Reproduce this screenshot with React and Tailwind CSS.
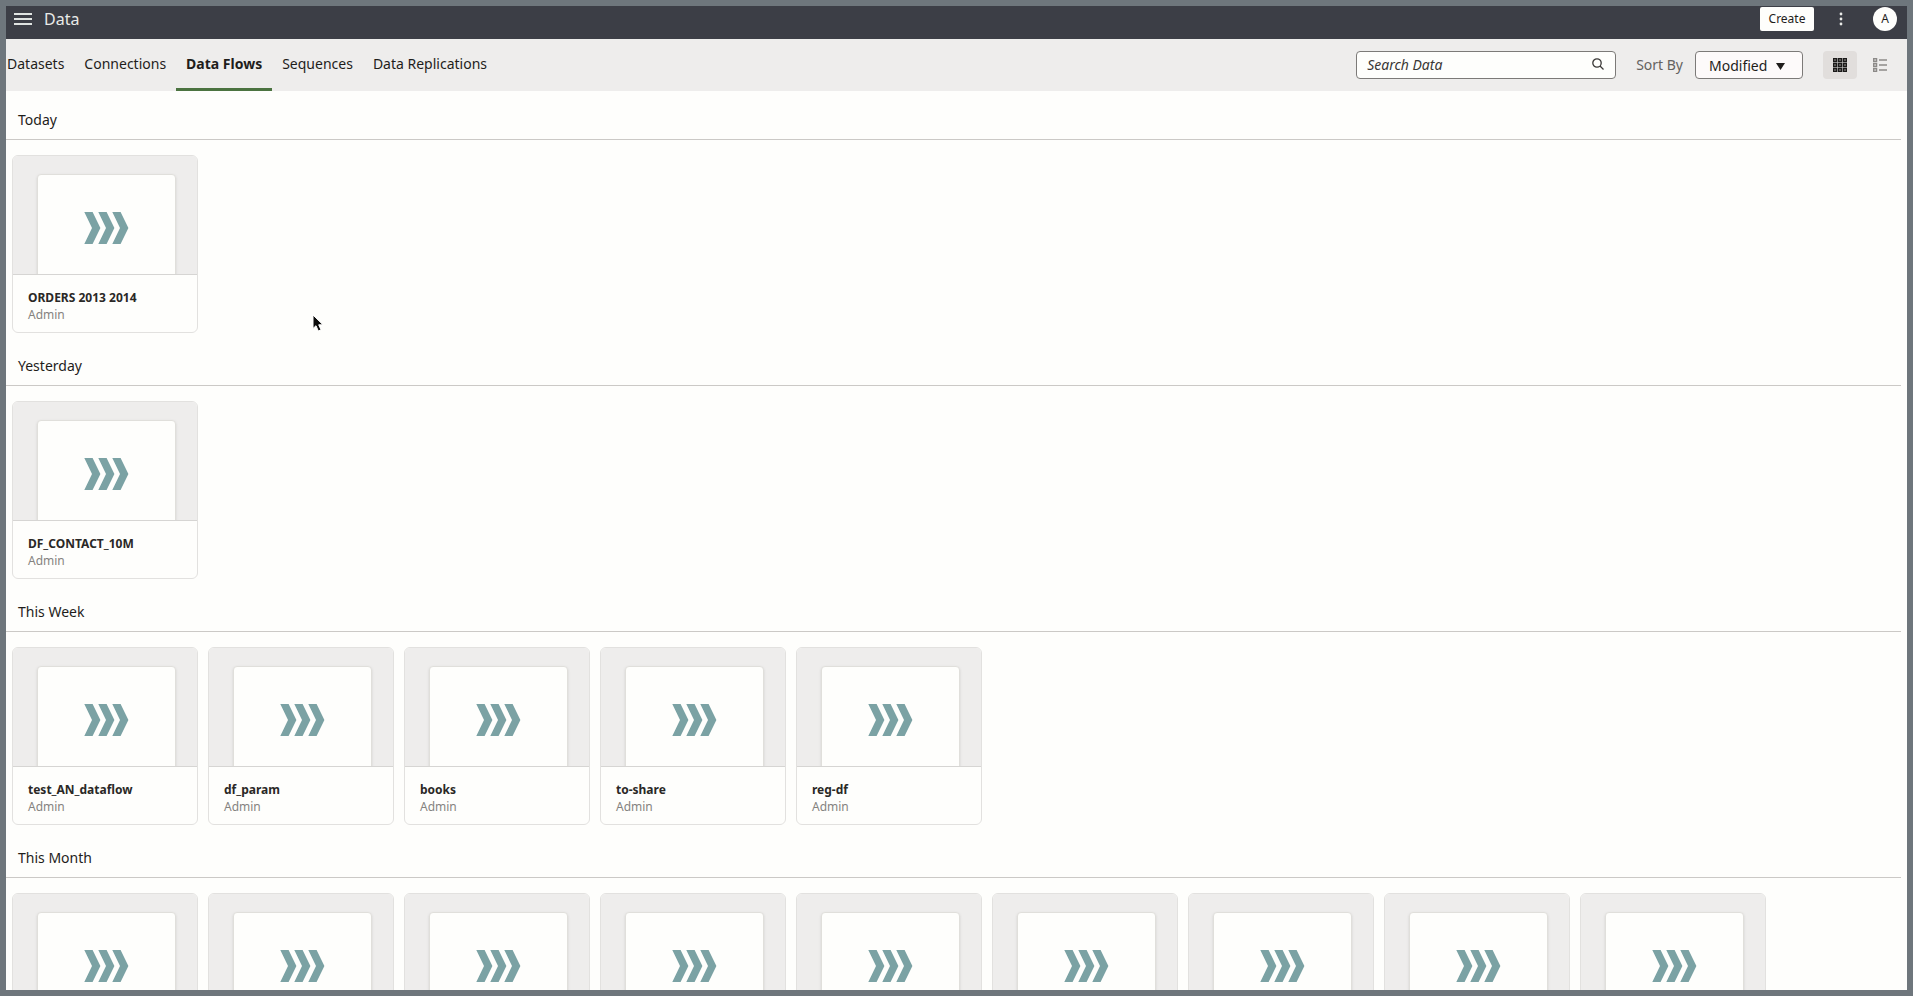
import { useState } from "react"

const tabs = ["Datasets", "Connections", "Data Flows", "Sequences", "Data Replications"]

const sections = [
  { title: "Today", flows: ["ORDERS 2013 2014"] },
  { title: "Yesterday", flows: ["DF_CONTACT_10M"] },
  { title: "This Week", flows: ["test_AN_dataflow", "df_param", "books", "to-share", "reg-df"] },
  // names of these are below the fold
  { title: "This Month", flows: ["", "", "", "", "", "", "", "", ""] },
]

const FlowIcon = () => (
  <svg width="45" height="32" viewBox="0 0 45 32" fill="#7ba2a4" aria-hidden="true">
    <path d="M0.3 0H8.6L16.4 16L8.6 32H0.3L8 16Z" />
    <path d="M14.3 0H22.6L30.4 16L22.6 32H14.3L22 16Z" />
    <path d="M28.3 0H36.6L44.4 16L36.6 32H28.3L36 16Z" />
  </svg>
)

const GridIcon = () => (
  <svg width="14" height="14" viewBox="0 0 14 14" fill="#8b8886" stroke="#1b1a19" strokeWidth="1.5" aria-hidden="true">
    {[0, 5, 10].map((y) => [0, 5, 10].map((x) => <rect key={`${x}-${y}`} x={x + 0.5} y={y + 0.5} width="3" height="3" />))}
  </svg>
)

const ListIcon = () => (
  <svg width="14" height="14" viewBox="0 0 14 14" fill="none" stroke="#8c8a88" strokeWidth="1.5" aria-hidden="true">
    {[0, 5, 10].map((y) => (
      <g key={y}>
        <rect x="0.7" y={y + 0.6} width="2.8" height="2.8" />
        <path d={`M6 ${y + 2}H14`} />
      </g>
    ))}
  </svg>
)

const FlowCard = ({ name }) => (
  <a
    href="#flow"
    aria-label={name || "Data flow"}
    className="block h-[178px] w-[186px] shrink-0 overflow-hidden rounded-md border border-[#e2e1df] bg-[#fefefc]"
  >
    <div className="h-[119px] overflow-hidden border-b border-[#d6d5d3] bg-[#eeedec] pt-[18px] pl-6">
      <div className="flex h-[110px] w-[139px] items-start justify-center rounded-t-sm border border-[#e0dfdb] bg-[#fefefc] pt-[37px] shadow-sm">
        <FlowIcon />
      </div>
    </div>
    {name && (
      <div className="px-[15px] pt-[14px] text-xs leading-[17px]">
        <div className="font-bold text-[#2a2826]">{name}</div>
        <div className="text-[#858380]">Admin</div>
      </div>
    )}
  </a>
)

const App = () => {
  const [activeTab, setActiveTab] = useState("Data Flows")
  const [search, setSearch] = useState("")

  return (
    <div className="relative flex h-screen flex-col overflow-hidden border-6 border-[#6e767c] bg-[#fefefc] font-['Noto_Sans','Open_Sans',sans-serif] text-sm text-[#1f1d1b]">
      <header className="flex h-[33px] shrink-0 items-start bg-[#3c3e46] pr-[10px] pl-2">
        <button aria-label="Menu" className="flex h-[26px] w-[18px] items-center">
          <svg width="18" height="12" viewBox="0 0 18 12" stroke="#dfe3e1" strokeWidth="2" aria-hidden="true">
            <path d="M0 1H18M0 6H18M0 11H18" />
          </svg>
        </button>
        <h1 className="ml-3 text-base leading-[26px] text-[#e9eae8]">Data</h1>
        <div className="mt-px ml-auto flex items-center">
          <button className="h-6 w-[54px] rounded-xs bg-[#fefefc] text-xs">Create</button>
          <button aria-label="More actions" className="ml-[21px] flex h-6 w-3 items-center justify-center">
            <svg width="4" height="14" viewBox="0 0 4 14" fill="#e9eae8" aria-hidden="true">
              <circle cx="2" cy="2" r="1.4" />
              <circle cx="2" cy="7" r="1.4" />
              <circle cx="2" cy="12" r="1.4" />
            </svg>
          </button>
          <button aria-label="Account" className="ml-[26px] h-6 w-6 rounded-full bg-[#fefefc] text-xs">
            A
          </button>
        </div>
      </header>

      <div className="flex h-[52px] shrink-0 items-center justify-between bg-[#eeedec] pr-[10px]">
        <nav className="-ml-[9px] flex h-full">
          {tabs.map((tab) => (
            <button
              key={tab}
              onClick={() => setActiveTab(tab)}
              className={`border-b-3 px-[10px] ${
                activeTab === tab ? "border-[#4b7340] font-bold" : "border-transparent"
              }`}
            >
              {tab}
            </button>
          ))}
        </nav>

        <div className="flex items-center">
          <div className="relative">
            <input
              type="text"
              aria-label="Search Data"
              placeholder="Search Data"
              value={search}
              onChange={(e) => setSearch(e.target.value)}
              className="block h-7 w-[260px] rounded-sm border border-[#7c7a78] bg-[#fefefc] pr-8 pb-[2px] pl-[10px] placeholder:text-[#3a3836] placeholder:italic"
            />
            <svg
              className="absolute top-[7px] right-3"
              width="12"
              height="12"
              viewBox="0 0 12 12"
              fill="none"
              stroke="#3a3836"
              strokeWidth="1.3"
              aria-hidden="true"
            >
              <circle cx="5" cy="5" r="4.2" />
              <path d="M8 8L11.5 11.5" />
            </svg>
          </div>
          <label htmlFor="sort" className="ml-5 text-[#64625f]">
            Sort By
          </label>
          <div className="relative ml-3">
            <select
              id="sort"
              className="block h-7 w-[108px] appearance-none rounded-sm border border-[#7c7a78] bg-[#fdfafa] pt-[2px] pl-[13px]"
            >
              <option>Modified</option>
              <option>Name</option>
            </select>
            <svg
              className="pointer-events-none absolute top-3 right-[18px]"
              width="9"
              height="7"
              viewBox="0 0 9 7"
              fill="#1f1d1b"
              aria-hidden="true"
            >
              <path d="M0 0H9L4.5 7Z" />
            </svg>
          </div>
          <button aria-label="Grid view" className="ml-5 flex h-7 w-[34px] items-center justify-center rounded-sm bg-[#e1dedc]">
            <GridIcon />
          </button>
          <button aria-label="List view" className="ml-[6px] flex h-7 w-[34px] items-center justify-center">
            <ListIcon />
          </button>
        </div>
      </div>

      <main className="min-h-0 flex-1 overflow-hidden pr-[6px]">
        {sections.map((section) => (
          <section key={section.title} className="pb-1">
            <h2 className="h-[49px] border-b border-[#cbc9c6] px-3 pt-[9px] leading-10">{section.title}</h2>
            <div className="flex gap-[10px] overflow-hidden pt-[15px] pl-[6px]">
              {section.flows.map((name, i) => (
                <FlowCard key={i} name={name} />
              ))}
            </div>
          </section>
        ))}
      </main>

      {/* pointer */}
      <svg className="pointer-events-none absolute top-[308px] left-[306px]" width="13" height="19" viewBox="0 0 13 19" aria-hidden="true">
        <path
          d="M1 1V14.5L4 11.7L6.3 17L9 15.8L6.7 10.8H11Z"
          fill="#0b0b0b"
          stroke="#ffffff"
          strokeWidth="1"
        />
      </svg>
    </div>
  )
}

export default App
